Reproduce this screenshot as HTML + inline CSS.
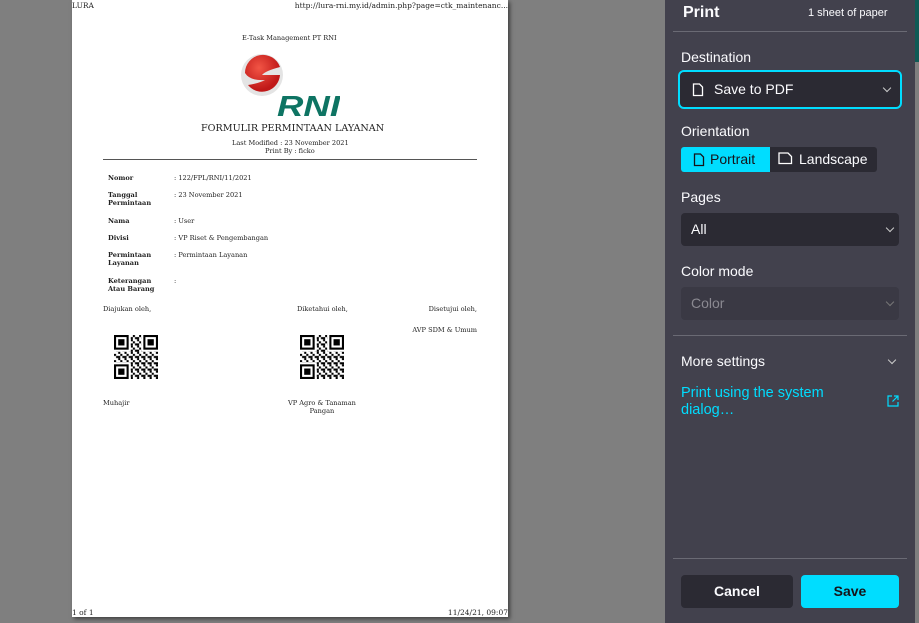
<!DOCTYPE html>
<html><head><style>
*{margin:0;padding:0;box-sizing:border-box}
body{width:919px;height:623px;background:#7f7f7f;position:relative;overflow:hidden;font-family:"DejaVu Serif","Liberation Serif",serif}
.paper{position:absolute;left:72px;top:0;width:436px;height:617px;background:#fff;box-shadow:2px 2px 4px rgba(0,0,0,.5)}
.a{position:absolute;white-space:nowrap;color:#222}
.s8{font-size:7.5px}.s7{font-size:6.6px}
.panel{position:absolute;left:665px;top:0;width:250px;height:623px;background:#42414d;font-family:"Liberation Sans","DejaVu Sans",sans-serif;color:#fbfbfe}
.p{position:absolute;white-space:nowrap}
.sel{position:absolute;left:16px;width:218px;height:33px;background:#2b2a33;border-radius:4px}
.chev{position:absolute;right:6px;top:12px;width:6px;height:6px;border-right:1.3px solid #ccc;border-bottom:1.3px solid #ccc;transform:rotate(45deg)}
.b{font-weight:bold}
</style></head><body>
<div class="paper">
<div class="a s8" style="left:0;top:1px">LURA</div>
<div class="a s8" style="right:0;top:1px">http://lura-rni.my.id/admin.php?page=ctk_maintenanc...</div>
<div class="a s7" style="left:170px;top:34px">E-Task Management PT RNI</div>
<svg style="position:absolute;left:168px;top:53px" width="100" height="66">
<defs><radialGradient id="g" cx="40%" cy="35%" r="60%"><stop offset="0" stop-color="#f25545"/><stop offset="1" stop-color="#c01818"/></radialGradient></defs>
<circle cx="22" cy="22" r="21" fill="#e4e4e4"/>
<path d="M5 20 A18 18 0 0 1 40 14 Q25 18 22 22 L40 22 A18 18 0 0 1 8 32 Q20 30 25 27 Q10 28 5 20Z" fill="url(#g)"/>
<text x="37" y="63" textLength="63" lengthAdjust="spacingAndGlyphs" font-family="Liberation Sans" font-weight="bold" font-style="italic" font-size="29" fill="#0e7463">RNI</text>
</svg>
<div class="a" style="left:129px;top:123px;font-size:9.6px">FORMULIR PERMINTAAN LAYANAN</div>
<div class="a s7" style="left:160px;top:139px">Last Modified : 23 November 2021</div>
<div class="a s7" style="left:193px;top:147px">Print By : ficko</div>
<div style="position:absolute;left:31px;top:159px;width:374px;height:1px;background:#555"></div>
<div class="a s7 b" style="left:36px;top:174px">Nomor</div><div class="a s7" style="left:102px;top:174px">: 122/FPL/RNI/11/2021</div>
<div class="a s7 b" style="left:36px;top:191px;line-height:8px">Tanggal<br>Permintaan</div><div class="a s7" style="left:102px;top:191px">: 23 November 2021</div>
<div class="a s7 b" style="left:36px;top:217px">Nama</div><div class="a s7" style="left:102px;top:217px">: User</div>
<div class="a s7 b" style="left:36px;top:234px">Divisi</div><div class="a s7" style="left:102px;top:234px">: VP Riset &amp; Pengembangan</div>
<div class="a s7 b" style="left:36px;top:251px;line-height:8px">Permintaan<br>Layanan</div><div class="a s7" style="left:102px;top:251px">: Permintaan Layanan</div>
<div class="a s7 b" style="left:36px;top:277px;line-height:8px">Keterangan<br>Atau Barang</div><div class="a s7" style="left:102px;top:277px">:</div>
<div class="a s7" style="left:31px;top:305px">Diajukan oleh,</div>
<div class="a s7" style="left:225px;top:305px">Diketahui oleh,</div>
<div class="a s7" style="right:31px;top:305px">Disetujui oleh,</div>
<div class="a s7" style="right:31px;top:326px">AVP SDM &amp; Umum</div>
<svg style="position:absolute;left:42px;top:335px" width="44" height="44" viewBox="0 0 21 21">
<defs><pattern id="q" width="3" height="3" patternUnits="userSpaceOnUse"><rect width="1" height="1" fill="#000"/><rect x="1" y="1" width="2" height="1" fill="#000"/><rect x="2" y="2" width="1" height="1" fill="#000"/></pattern></defs>
<rect width="21" height="21" fill="url(#q)"/>
<g fill="#fff"><rect width="8" height="8"/><rect x="13" width="8" height="8"/><rect y="13" width="8" height="8"/></g>
<g fill="#000"><rect width="7" height="7"/><rect x="14" width="7" height="7"/><rect y="14" width="7" height="7"/></g>
<g fill="#fff"><rect x="1" y="1" width="5" height="5"/><rect x="15" y="1" width="5" height="5"/><rect x="1" y="15" width="5" height="5"/></g>
<g fill="#000"><rect x="2" y="2" width="3" height="3"/><rect x="16" y="2" width="3" height="3"/><rect x="2" y="16" width="3" height="3"/></g>
</svg>
<svg style="position:absolute;left:228px;top:335px" width="44" height="44" viewBox="0 0 21 21">
<rect width="21" height="21" fill="url(#q)"/>
<g fill="#fff"><rect width="8" height="8"/><rect x="13" width="8" height="8"/><rect y="13" width="8" height="8"/></g>
<g fill="#000"><rect width="7" height="7"/><rect x="14" width="7" height="7"/><rect y="14" width="7" height="7"/></g>
<g fill="#fff"><rect x="1" y="1" width="5" height="5"/><rect x="15" y="1" width="5" height="5"/><rect x="1" y="15" width="5" height="5"/></g>
<g fill="#000"><rect x="2" y="2" width="3" height="3"/><rect x="16" y="2" width="3" height="3"/><rect x="2" y="16" width="3" height="3"/></g>
</svg>
<div class="a s7" style="left:31px;top:399px">Muhajir</div>
<div class="a s7" style="left:216px;top:399px;text-align:center;line-height:8px">VP Agro &amp; Tanaman<br>Pangan</div>
<div class="a s8" style="left:0;bottom:0">1 of 1</div>
<div class="a s8" style="right:0;bottom:0">11/24/21, 09:07</div>
</div>
<div style="position:absolute;left:915px;top:0;width:4px;height:623px;background:#7f7f7f"></div>
<div style="position:absolute;left:915px;top:0;width:4px;height:62px;background:#0f5a55"></div>
<div class="panel">
<div class="p b" style="left:18px;top:4px;font-size:16px">Print</div>
<div class="p" style="left:143px;top:7px;font-size:11px">1 sheet of paper</div>
<div style="position:absolute;left:8px;top:31px;width:234px;height:1px;background:#6a6a74"></div>
<div class="p" style="left:16px;top:49px;font-size:14px">Destination</div>
<div class="sel" style="top:70px;left:13px;width:224px;height:39px;border:2px solid #00ddff;border-radius:6px;background:#2b2a33">
<svg style="position:absolute;left:12px;top:11px" width="12" height="14"><path d="M1.5 1h6l3 3v8.5h-9z" fill="none" stroke="#fff" stroke-width="1.3"/></svg>
<div class="p" style="left:34px;top:9px;font-size:14px">Save to PDF</div><div class="chev" style="right:10px;top:13px"></div></div>
<div class="p" style="left:16px;top:123px;font-size:14px">Orientation</div>
<div style="position:absolute;left:16px;top:147px;width:89px;height:25px;background:#00ddff;border-radius:3px 0 0 3px"></div>
<div style="position:absolute;left:105px;top:147px;width:107px;height:25px;background:#2b2a33;border-radius:0 3px 3px 0"></div>
<svg style="position:absolute;left:28px;top:153px" width="12" height="14"><path d="M1.5 1h6l3 3v8.5h-9z" fill="none" stroke="#15141a" stroke-width="1.3"/></svg>
<div class="p" style="left:45px;top:151px;font-size:14px;color:#15141a">Portrait</div>
<svg style="position:absolute;left:113px;top:152px" width="15" height="13"><path d="M1 1h9l3.5 3.5v7H1z" fill="none" stroke="#fff" stroke-width="1.3"/></svg>
<div class="p" style="left:134px;top:151px;font-size:14px">Landscape</div>
<div class="p" style="left:16px;top:189px;font-size:14px">Pages</div>
<div class="sel" style="top:213px"><div class="p" style="left:10px;top:8px;font-size:14px">All</div><div class="chev" style="top:12px"></div></div>
<div class="p" style="left:16px;top:263px;font-size:14px">Color mode</div>
<div class="sel" style="top:287px;background:#3a3944"><div class="p" style="left:10px;top:8px;font-size:14px;color:#8a8991">Color</div><div class="chev" style="top:12px;border-color:#777"></div></div>
<div style="position:absolute;left:8px;top:335px;width:234px;height:1px;background:#6a6a74"></div>
<div class="p" style="left:16px;top:353px;font-size:14px">More settings</div><div class="chev" style="right:20px;top:357px"></div>
<div class="p" style="left:16px;top:385px;font-size:14.5px;color:#00ddff;line-height:17px">Print using the system<br>dialog…</div>
<svg style="position:absolute;left:222px;top:395px" width="12" height="12"><path d="M5 1H1v10h10V7M7 1h4v4M11 1L5.5 6.5" fill="none" stroke="#00ddff" stroke-width="1.2"/></svg>
<div style="position:absolute;left:8px;top:558px;width:234px;height:1px;background:#6a6a74"></div>
<div style="position:absolute;left:16px;top:575px;width:112px;height:33px;background:#2b2a33;border-radius:4px;text-align:center;line-height:33px;font-size:14px;font-weight:bold">Cancel</div>
<div style="position:absolute;left:136px;top:575px;width:98px;height:33px;background:#00ddff;border-radius:4px;text-align:center;line-height:33px;font-size:14px;font-weight:bold;color:#15141a">Save</div>
</div>
</body></html>
